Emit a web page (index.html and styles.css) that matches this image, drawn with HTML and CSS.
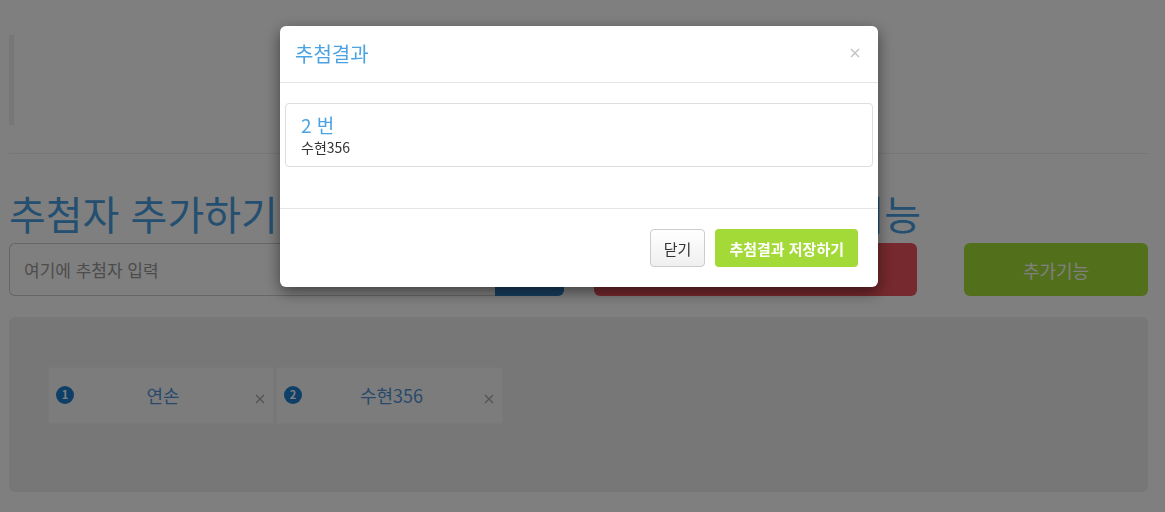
FILE: index.html
```html
<!DOCTYPE html>
<html lang="ko">
<head>
<meta charset="utf-8">
<title>추첨</title>
<link rel="stylesheet" href="styles.css">
</head>
<body>
<div class="page">
  <blockquote class="quote"></blockquote>
  <hr class="divider">
  <div class="controls">
    <div class="col col-main">
      <h1 class="title">추첨자 추가하기</h1>
      <div class="input-group">
        <input class="name-input" type="text" placeholder="여기에 추첨자 입력">
        <button class="btn btn-add">추가</button>
      </div>
    </div>
    <div class="col col-mid">
      <h1 class="title title-right">추첨 기능</h1>
      <button class="btn btn-draw">추첨하기</button>
    </div>
    <div class="col col-side">
      <div class="title-spacer"></div>
      <button class="btn btn-extra">추가기능</button>
    </div>
  </div>
  <div class="board">
    <div class="card">
      <span class="badge">1</span>
      <span class="card-name">연손</span>
      <svg class="card-close" width="10" height="10" viewBox="0 0 10 10"><path d="M1 1L9 9M9 1L1 9" stroke="#a8a8a8" stroke-width="1.4" fill="none"/></svg>
    </div>
    <div class="card">
      <span class="badge">2</span>
      <span class="card-name">수현356</span>
      <svg class="card-close" width="10" height="10" viewBox="0 0 10 10"><path d="M1 1L9 9M9 1L1 9" stroke="#a8a8a8" stroke-width="1.4" fill="none"/></svg>
    </div>
  </div>
</div>

<div class="backdrop"></div>

<div class="modal">
  <div class="modal-header">
    <h4 class="modal-title">추첨결과</h4>
    <svg class="modal-close" width="10" height="10" viewBox="0 0 10 10"><path d="M1 1L9 9M9 1L1 9" stroke="#c4c4c4" stroke-width="1.5" fill="none"/></svg>
  </div>
  <div class="modal-body">
    <div class="result">
      <div class="result-num">2 번</div>
      <div class="result-name">수현356</div>
    </div>
  </div>
  <div class="modal-footer">
    <button class="btn btn-close">닫기</button>
    <button class="btn btn-save">추첨결과 저장하기</button>
  </div>
</div>
</body>
</html>
```

FILE: styles.css
```css
* { box-sizing: border-box; }

html, body {
  margin: 0;
  padding: 0;
  background: #fff;
  font-family: "Noto Sans CJK KR", "Noto Sans", sans-serif;
  color: #333;
  font-size: 14px;
}

.page {
  padding: 35px 17px 0 9px;
  width: 1165px;
  height: 512px;
  overflow: hidden;
}

.quote {
  margin: 0;
  height: 90px;
  border-left: 5px solid #eee;
}

.divider {
  margin: 28px 0 0 0;
  border: 0;
  border-top: 1px solid #eee;
  height: 0;
}

.controls {
  display: flex;
  margin-top: 29px;
}

.col { display: flex; flex-direction: column; }
.col-main { width: 555px; }
.col-mid { width: 323px; margin-left: 30px; }
.col-side { width: 184px; margin-left: 47px; }

.title {
  margin: 0;
  height: 60px;
  font-size: 40px;
  font-weight: 400;
  line-height: 60px;
  color: #4a9fe0;
  white-space: nowrap;
}
.title-right { text-align: right; margin-right: -4px; }
.title-spacer { height: 60px; }

.input-group {
  display: flex;
  height: 53px;
}

.name-input {
  flex: 1;
  height: 53px;
  border: 1px solid #ccc;
  border-right: 0;
  border-radius: 6px 0 0 6px;
  padding: 0 14px;
  font-family: inherit;
  font-size: 17px;
  color: #555;
  outline: none;
}
.name-input::placeholder { color: #999; }

.btn {
  font-family: inherit;
  border: 1px solid transparent;
  cursor: pointer;
}

.btn-add {
  width: 69px;
  height: 53px;
  background: #2f7fbf;
  color: #fff;
  border-radius: 0 6px 6px 0;
  font-size: 18px;
}

.btn-draw {
  height: 53px;
  background: #ec535d;
  color: #fff;
  border-radius: 6px;
  font-size: 18px;
}

.btn-extra {
  height: 53px;
  background: #a4df38;
  color: #fff;
  border-radius: 6px;
  font-size: 18px;
}

.board {
  margin-top: 21px;
  height: 175px;
  background: #eee;
  border-radius: 6px;
  padding: 50px 39px;
  display: flex;
  gap: 2px;
  align-items: flex-start;
}

.card {
  width: 226px;
  height: 57px;
  background: #f9f9f9;
  border: 1px solid #f3f3f3;
  display: flex;
  align-items: center;
  padding: 0 8px 0 7px;
}
.card + .card { width: 227px; }

.badge {
  width: 18px;
  height: 18px;
  border-radius: 50%;
  background: #1b7fd0;
  color: #fff;
  font-size: 11px;
  font-weight: 700;
  line-height: 1;
  display: flex;
  align-items: center;
  justify-content: center;
  margin-top: -2px;
}

.card-name {
  flex: 1;
  text-align: center;
  font-size: 18px;
  color: #4f94d8;
  margin-top: -2px;
}

.card-close {
  margin-right: 0;
  margin-left: 3px;
  margin-top: 6px;
}

.backdrop {
  position: fixed;
  inset: 0;
  background: rgba(0, 0, 0, 0.5);
}

.modal {
  position: fixed;
  top: 26px;
  left: 280px;
  width: 598px;
  background: #fff;
  border-radius: 6px;
  box-shadow: 0 5px 15px rgba(0, 0, 0, 0.5);
}

.modal-header {
  display: flex;
  align-items: center;
  justify-content: space-between;
  padding: 15px 18px 15px 15px;
  height: 57px;
  border-bottom: 1px solid #e5e5e5;
}

.modal-title {
  margin: 0;
  font-size: 20px;
  font-weight: 400;
  color: #4ba3e3;
  line-height: 26px;
}

.modal-close {
  margin-top: -2px;
}

.modal-body {
  padding: 20px 5px 41px;
  border-bottom: 1px solid #e5e5e5;
}

.result {
  border: 1px solid #ddd;
  border-radius: 4px;
  padding: 8px 15px 9px;
  height: 64px;
}

.result-num {
  font-size: 19px;
  line-height: 26px;
  color: #4ba3e3;
}

.result-name {
  font-size: 14px;
  line-height: 19px;
  color: #333;
}

.modal-footer {
  display: flex;
  justify-content: flex-end;
  gap: 10px;
  padding: 20px;
}

.btn-close {
  height: 38px;
  padding: 0 13px;
  font-size: 15px;
  color: #333;
  background: linear-gradient(#fff, #efefef);
  border: 1px solid #ccc;
  border-radius: 4px;
}

.btn-save {
  height: 38px;
  padding: 0 13px;
  font-size: 15px;
  font-weight: 700;
  color: #fff;
  background: #a4da38;
  border-radius: 4px;
}
```
